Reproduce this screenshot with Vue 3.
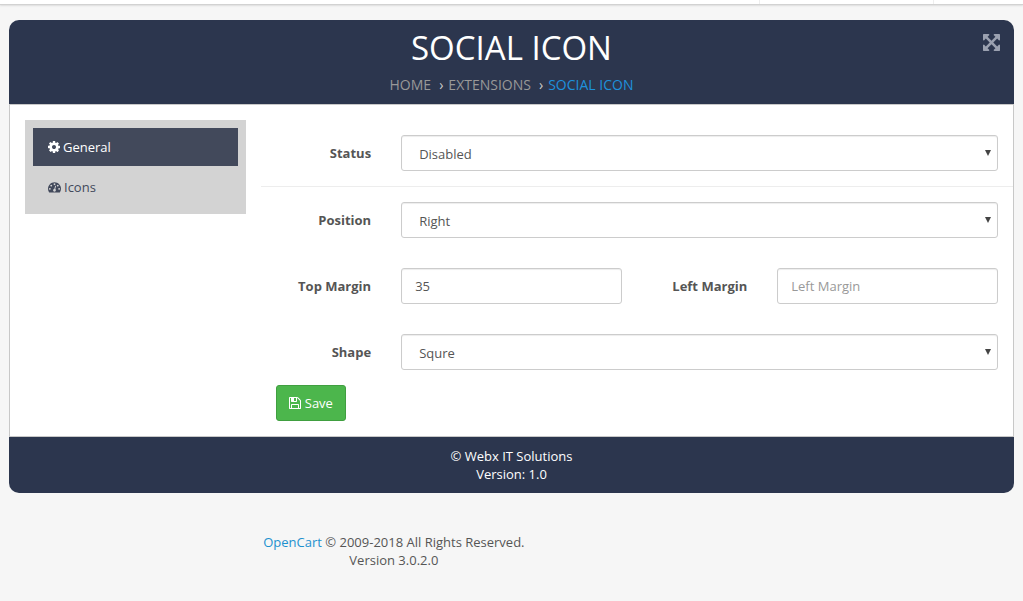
<script setup>
import { ref } from 'vue'

const icons = {
  cog: 'M1152 896q0-106-75-181t-181-75-181 75-75 181 75 181 181 75 181-75 75-181zm512-109v222q0 12-8 23t-20 13l-185 28q-19 54-39 91 35 50 107 138 10 12 10 25t-9 23q-27 37-99 108t-94 71q-12 0-26-9l-138-108q-44 23-91 38-16 136-29 186-7 28-36 28h-222q-14 0-24.5-8.5t-11.5-21.5l-28-184q-49-16-90-37l-141 107q-10 9-25 9-14 0-25-11-126-114-165-168-7-10-7-23 0-12 8-23 15-21 51-66.5t54-70.5q-27-50-41-99l-183-27q-13-2-21-12.5t-8-23.5v-222q0-12 8-23t19-13l186-28q14-46 39-92-40-57-107-138-10-12-10-24 0-10 9-23 26-36 98.5-107.5t94.5-71.5q13 0 26 10l138 107q44-23 91-38 16-136 29-186 7-28 36-28h222q14 0 24.5 8.5t11.5 21.5l28 184q49 16 90 37l142-107q9-9 24-9 13 0 25 10 129 119 165 170 7 8 7 22 0 12-8 23-15 21-51 66.5t-54 70.5q26 50 41 98l183 28q13 2 21 12.500t8 23.500z',
  gauge: 'M384 1152q0-53-37.5-90.5t-90.5-37.5-90.5 37.5-37.5 90.5 37.5 90.5 90.5 37.5 90.5-37.5 37.5-90.5zm192-448q0-53-37.5-90.5t-90.5-37.5-90.5 37.5-37.5 90.5 37.5 90.5 90.5 37.5 90.5-37.5 37.5-90.5zm428 481l101-382q6-26-7.5-48.5t-38.5-29.5-48 6.5-30 39.5l-101 382q-60 5-107 43.5t-63 98.5q-20 77 20 146t117 89 146-20 89-117q16-60-6-117t-72-91zm660-33q0-53-37.5-90.5t-90.5-37.5-90.5 37.5-37.5 90.5 37.5 90.5 90.5 37.5 90.5-37.5 37.5-90.5zm-640-640q0-53-37.5-90.5t-90.5-37.5-90.5 37.5-37.5 90.5 37.5 90.5 90.5 37.5 90.5-37.5 37.5-90.5zm448 192q0-53-37.5-90.5t-90.5-37.5-90.5 37.5-37.5 90.5 37.5 90.5 90.5 37.5 90.5-37.5 37.5-90.5zm320 448q0 261-141 483-19 29-54 29h-1402q-35 0-54-29-141-221-141-483 0-182 71-348t191-286 286-191 348-71 348 71 286 191 191 286 71 348z',
  save: 'M512 1536h768v-384h-768v384zm896 0h128v-896q0-14-10-38.5t-20-34.5l-281-281q-10-10-34-20t-39-10v416q0 40-28 68t-68 28h-576q-40 0-68-28t-28-68v-416h-128v1280h128v-416q0-40 28-68t68-28h832q40 0 68 28t28 68v416zm-384-928v-320q0-13-9.5-22.5t-22.5-9.5h-192q-13 0-22.5 9.5t-9.5 22.5v320q0 13 9.5 22.5t22.5 9.5h192q13 0 22.5-9.5t9.5-22.5zm640 32v928q0 40-28 68t-68 28h-1344q-40 0-68-28t-28-68v-1344q0-40 28-68t68-28h928q40 0 88 20t76 48l280 280q28 28 48 76t20 88z',
  expand: 'M1411 541l-355 355 355 355 144-144q29-31 70-14 39 17 39 59v448q0 26-19 45t-45 19h-448q-42 0-59-40-17-39 14-69l144-144-355-355-355 355 144 144q31 30 14 69-17 40-59 40h-448q-26 0-45-19t-19-45v-448q0-42 40-59 39-17 69 14l144 144 355-355-355-355-144 144q-19 19-45 19-12 0-24-5-40-17-40-59v-448q0-26 19-45t45-19h448q42 0 59 40 17 39-14 69l-144 144 355 355 355-355-144-144q-31-30-14-69 17-40 59-40h448q26 0 45 19t19 45v448q0 42-39 59-13 5-25 5-26 0-45-19z'
}

const status = ref('Disabled')
const position = ref('Right')
const topMargin = ref('35')
const leftMargin = ref('')
const shape = ref('Squre')
</script>

<template>
  <div class="page">
    <div class="topbar"><span class="cell"></span><span class="cell end"></span></div>

    <main class="panel">
      <header class="head">
        <h1>SOCIAL ICON</h1>
        <nav class="crumbs" aria-label="Breadcrumb">
          <a href="#">HOME</a><span class="sep">›</span><a href="#">EXTENSIONS</a><span class="sep">›</span><a href="#" class="current">SOCIAL ICON</a>
        </nav>
        <button type="button" class="expand" aria-label="Full screen">
          <svg viewBox="128 128 1536 1536"><path :d="icons.expand" /></svg>
        </button>
      </header>

      <div class="body">
        <nav class="tabs" aria-label="Sections">
          <a href="#" class="tab active"><svg class="icon" viewBox="128 128 1536 1536"><path :d="icons.cog" /></svg>General</a>
          <a href="#" class="tab"><svg class="icon wide" viewBox="0 128 1792 1536"><path :d="icons.gauge" /></svg>Icons</a>
        </nav>

        <form class="form" @submit.prevent>
          <div class="group">
            <label for="status">Status</label>
            <div class="select full">
              <select id="status" v-model="status"><option>Enabled</option><option>Disabled</option></select>
            </div>
          </div>
          <div class="group ruled">
            <label for="position">Position</label>
            <div class="select full">
              <select id="position" v-model="position"><option>Left</option><option>Right</option></select>
            </div>
          </div>
          <div class="group">
            <label for="top">Top Margin</label>
            <div class="field"><input id="top" v-model="topMargin" type="text" placeholder="Top Margin"></div>
            <label for="left">Left Margin</label>
            <div class="field"><input id="left" v-model="leftMargin" type="text" placeholder="Left Margin"></div>
          </div>
          <div class="group">
            <label for="shape">Shape</label>
            <div class="select full">
              <select id="shape" v-model="shape"><option>Squre</option><option>Circle</option></select>
            </div>
          </div>
          <button type="submit" class="save"><svg class="icon" viewBox="128 128 1536 1536"><path :d="icons.save" /></svg>Save</button>
        </form>
      </div>

      <div class="foot">© Webx IT Solutions<br>Version: 1.0</div>
    </main>

    <footer class="copyright"><a href="#">OpenCart</a> © 2009-2018 All Rights Reserved.<br>Version 3.0.2.0</footer>
  </div>
</template>

<style>
body {
  background: #f6f6f6;
}
</style>

<style scoped>
.page,
.page * {
  box-sizing: border-box;
}
.page {
  font: 13px/18px "Open Sans", "Noto Sans", sans-serif;
  color: #555;
}
a {
  text-decoration: none;
}
svg {
  fill: currentColor;
}
.topbar {
  display: flex;
  justify-content: flex-end;
  height: 5px;
  background: #fff;
  border-bottom: 1px solid #d2d2d2;
  box-shadow: 0 1px 2px rgba(0, 0, 0, 0.1);
}
.cell {
  width: 174px;
  border-left: 1px solid #eee;
}
.cell.end {
  width: 90px;
}
.panel {
  margin: 15px 9px 0;
}
.head {
  position: relative;
  padding: 6px 15px 9px;
  text-align: center;
  background: #2c364e;
  border-radius: 10px 10px 0 0;
}
h1 {
  margin: 0;
  font-size: 33px;
  line-height: 44px;
  font-weight: 400;
  color: #fff;
}
.crumbs {
  padding-top: 5px;
  font-size: 14px;
  line-height: 20px;
}
.crumbs a {
  color: #999;
}
.crumbs .current {
  color: #1e91dc;
}
.sep {
  padding: 0 5px 0 8px;
  color: #ccc;
}
.expand {
  position: absolute;
  top: 14px;
  right: 14px;
  display: flex;
  padding: 0;
  border: 0;
  background: none;
  color: #9ba1b0;
}
.expand svg {
  width: 17px;
  height: 17px;
}
.body {
  display: grid;
  grid-template-columns: minmax(0, 1fr) minmax(0, 3fr);
  align-items: start;
  padding: 15px 0;
  background: #fff;
  border: 1px solid #c8c8c8;
}
.tabs {
  display: grid;
  gap: 2px;
  margin: 0 15px;
  padding: 8px;
  background: #d3d3d3;
}
.tab {
  display: flex;
  align-items: center;
  gap: 3px;
  padding: 10px 15px;
  color: #42495b;
}
.tab.active {
  background: #42495b;
  color: #fff;
}
.icon {
  flex: none;
  width: 12px;
  height: 12px;
}
.icon.wide {
  width: 13px;
}
.group {
  display: grid;
  grid-template-columns: 2fr 4fr 2fr 4fr;
  align-items: center;
  padding: 15px 0;
}
.ruled {
  border-top: 1px solid #ededed;
}
label {
  padding: 0 15px;
  text-align: right;
  font-weight: 700;
}
.field,
.select {
  padding: 0 15px;
}
.select {
  position: relative;
}
.full {
  grid-column: 2 / -1;
}
.select::after {
  content: "";
  position: absolute;
  top: 15px;
  right: 22px;
  border: solid transparent;
  border-width: 6px 3px 0;
  border-top-color: #444;
  pointer-events: none;
}
input,
select {
  display: block;
  width: 100%;
  height: 36px;
  margin: 0;
  padding: 8px 13px;
  font: inherit;
  color: #555;
  background: #fff;
  border: 1px solid #ccc;
  border-radius: 3px;
  box-shadow: inset 0 1px 1px rgba(0, 0, 0, 0.075);
}
select {
  appearance: none;
  padding: 9px 17px 7px;
}
input::placeholder {
  color: #999;
}
.save {
  display: flex;
  align-items: center;
  gap: 4px;
  margin-left: 15px;
  padding: 8px 12px;
  font: inherit;
  color: #fff;
  background: #4cb64c;
  border: 1px solid #409f40;
  border-radius: 3px;
}
.foot {
  padding: 10px;
  text-align: center;
  color: #fff;
  background: #2c364e;
  border-radius: 0 0 10px 10px;
}
.copyright {
  padding: 40px 23% 30px 0;
  text-align: center;
}
.copyright a {
  color: #1e91cf;
}
</style>
